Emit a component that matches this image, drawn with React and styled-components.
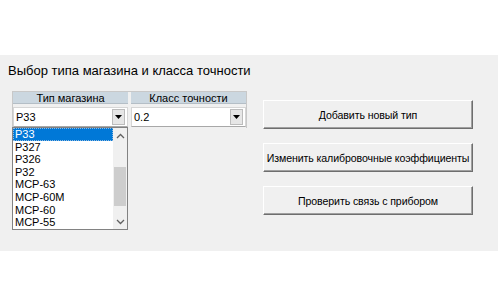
import React from 'react';
import styled, { createGlobalStyle } from 'styled-components';

const GlobalStyle = createGlobalStyle`
  body {
    margin: 0;
    background: #ffffff;
    font-family: 'Liberation Sans', Arial, sans-serif;
  }
`;

const types = ['Р33', 'Р327', 'Р326', 'Р32', 'МСР-63', 'МСР-60М', 'МСР-60', 'МСР-55'];

const buttons = [
  'Добавить новый тип',
  'Изменить калибровочные коэффициенты',
  'Проверить связь с прибором',
];

const Chevron = ({ up }) => (
  <svg width="9" height="6" viewBox="0 0 9 6">
    <polyline
      points={up ? '1,5 4.5,1.5 8,5' : '1,1 4.5,4.5 8,1'}
      fill="none"
      stroke="#606060"
      strokeWidth="1.3"
    />
  </svg>
);

const ComboCell = ({ value }) => (
  <Combo>
    <ComboText>{value}</ComboText>
    <ComboArrow>
      <svg width="7" height="4" viewBox="0 0 7 4">
        <polygon points="0,0 7,0 3.5,4" fill="#000" />
      </svg>
    </ComboArrow>
  </Combo>
);

const App = () => {
  return (
    <Page>
      <GlobalStyle />
      <Panel>
        <Title>Выбор типа магазина и класса точности</Title>
        <Content>
          <TableWrap>
            <Grid>
              <HeadCell>Тип магазина</HeadCell>
              <HeadCell>Класс точности</HeadCell>
              <ComboCell value="Р33" />
              <ComboCell value="0.2" />
            </Grid>
            <DropList>
              <Items>
                {types.map((t, i) => (
                  <Item key={t} selected={i === 0}>
                    {t}
                  </Item>
                ))}
              </Items>
              <ScrollBar>
                <ScrollArrow>
                  <Chevron up />
                </ScrollArrow>
                <Track>
                  <Thumb />
                </Track>
                <ScrollArrow>
                  <Chevron />
                </ScrollArrow>
              </ScrollBar>
            </DropList>
          </TableWrap>
          <ButtonColumn>
            {buttons.map((b) => (
              <Button key={b} type="button">
                {b}
              </Button>
            ))}
          </ButtonColumn>
        </Content>
      </Panel>
    </Page>
  );
};

const Page = styled.div`
  padding-top: 55px;
  width: 498px;
  height: 305px;
  box-sizing: border-box;
`;

const Panel = styled.div`
  background: #f0f0f0;
  height: 196px;
  box-sizing: border-box;
  padding: 8px 8px 0;
`;

const Title = styled.div`
  font-size: 13px;
  line-height: 16px;
  color: #000;
`;

const Content = styled.div`
  display: flex;
  align-items: flex-start;
  margin-top: 12px;
`;

const TableWrap = styled.div`
  position: relative;
  margin-left: 4px;
`;

const Grid = styled.div`
  display: grid;
  grid-template-columns: 115px 115px;
  grid-template-rows: 12px 20px;
  column-gap: 3px;
  row-gap: 3px;
  padding: 0 0 1px;
  border: 1px solid #c8c8c8;
  border-bottom: 0;
  background: #f0f0f0;
`;

const HeadCell = styled.div`
  background: #cbd7e0;
  border-bottom: 1px solid #b4bec6;
  font-size: 11px;
  line-height: 12px;
  text-align: center;
  color: #000;
`;

const Combo = styled.div`
  display: flex;
  align-items: center;
  background: #fff;
  border: 1px solid #d6d6d6;
  border-bottom-color: #a8a8a8;
  height: 20px;
  box-sizing: border-box;
  padding-right: 2px;
`;

const ComboText = styled.div`
  flex: 1;
  font-size: 11px;
  padding-left: 2px;
  color: #000;
`;

const ComboArrow = styled.div`
  width: 13px;
  height: 16px;
  display: flex;
  align-items: center;
  justify-content: center;
  background: #e6e6e6;
  border: 1px solid #bcbcbc;
  box-sizing: border-box;
`;

const DropList = styled.div`
  position: absolute;
  left: 0;
  top: 36px;
  width: 116px;
  height: 103px;
  box-sizing: border-box;
  border: 1px solid #828282;
  background: #fff;
  display: flex;
`;

const Items = styled.div`
  flex: 1;
  display: flex;
  flex-direction: column;
`;

const Item = styled.div`
  height: 12.6px;
  line-height: 12.6px;
  font-size: 11px;
  padding-left: 2px;
  color: ${(p) => (p.selected ? '#fff' : '#000')};
  background: ${(p) => (p.selected ? '#0078d7' : 'transparent')};
  outline: ${(p) => (p.selected ? '1px dotted #8fb8e0' : 'none')};
  outline-offset: -1px;
`;

const ScrollBar = styled.div`
  width: 14px;
  background: #f0f0f0;
  display: flex;
  flex-direction: column;
`;

const ScrollArrow = styled.div`
  height: 15px;
  display: flex;
  align-items: center;
  justify-content: center;
`;

const Track = styled.div`
  flex: 1;
  display: flex;
  flex-direction: column;
  padding-top: 24px;
`;

const Thumb = styled.div`
  height: 39px;
  margin: 0 1px;
  background: #cdcdcd;
`;

const ButtonColumn = styled.div`
  display: flex;
  flex-direction: column;
  gap: 14px;
  margin-top: 9px;
  margin-left: 16px;
`;

const Button = styled.button`
  width: 210px;
  height: 29px;
  padding: 0;
  margin: 0;
  background: #f0f0f0;
  border: 1px solid #fff;
  border-right-color: #6e6e6e;
  border-bottom-color: #6e6e6e;
  box-shadow: inset -1px -1px 0 #a0a0a0;
  font-family: 'Liberation Sans', Arial, sans-serif;
  font-size: 10.6px;
  letter-spacing: -0.1px;
  white-space: nowrap;
  color: #000;
  text-align: center;
  cursor: pointer;
`;

export default App;
